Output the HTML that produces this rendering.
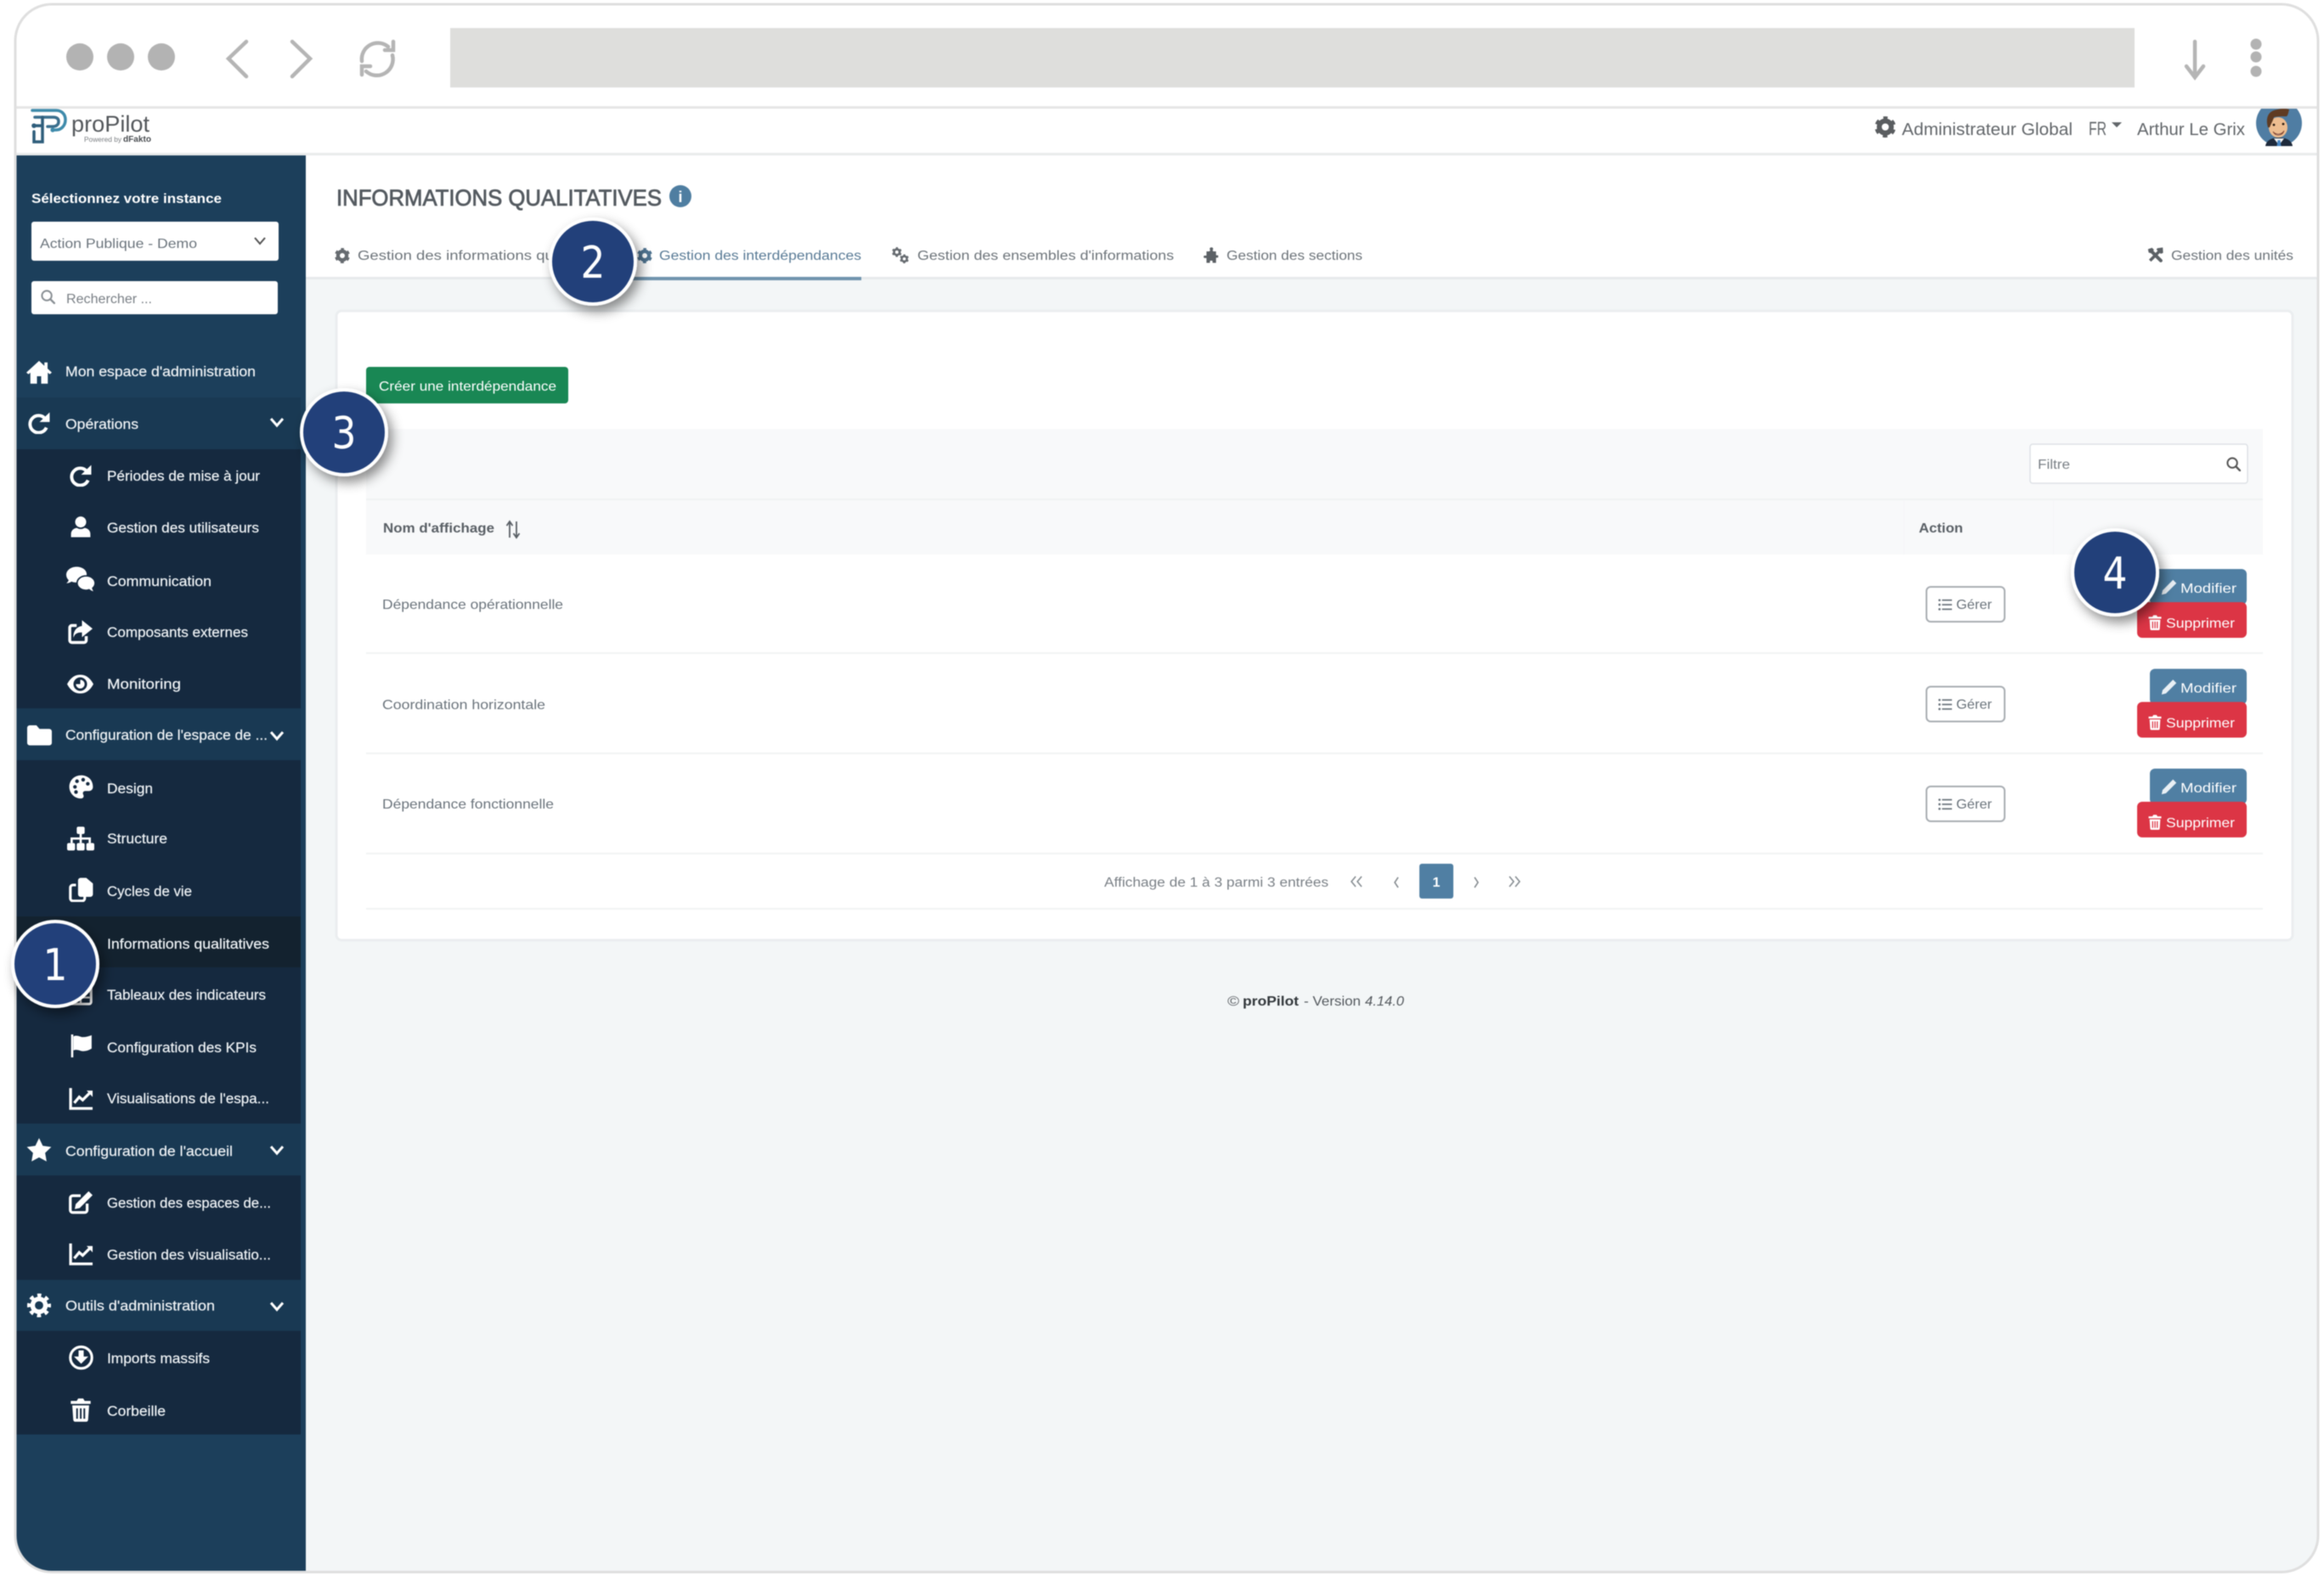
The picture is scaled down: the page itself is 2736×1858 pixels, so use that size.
<!DOCTYPE html>
<html lang="fr"><head><meta charset="utf-8"><title>proPilot</title>
<style>
html,body{margin:0;padding:0;background:#fff;width:2736px;height:1858px;overflow:hidden}
svg{display:block;filter:blur(.55px)}
text{font-family:"Liberation Sans",Arial,sans-serif;white-space:pre}
.s{font-size:16.5px;fill:#eef2f5;stroke:#eef2f5;stroke-width:.2}
.t{font-size:15.5px;fill:#6e757b}
.r{font-size:16px;fill:#6c757d}
.b{font-size:16px;fill:#fff}
.n{font-size:52px;fill:#fff;font-family:"DejaVu Sans","Liberation Sans",sans-serif;text-anchor:middle}
</style></head><body>
<svg xmlns="http://www.w3.org/2000/svg" width="2736" height="1858" viewBox="0 0 2736 1858">
<defs>
<clipPath id="win"><rect x="19" y="5" width="2709" height="1845" rx="42"/></clipPath>
<clipPath id="av"><rect x="2650" y="128" width="70" height="50"/></clipPath>
<filter id="sh" x="-30%" y="-30%" width="170%" height="170%"><feDropShadow dx="5" dy="7" stdDeviation="7" flood-color="#000" flood-opacity=".45"/></filter>
<symbol id="home" viewBox="0 0 24 24"><path fill="currentColor" d="M12 1.500 0 12.500l2 1.600 1.800-1.500V23H10v-7h4v7h6.200V12.600l1.800 1.500 2-1.600L20 8.800V3h-3v3.200z"/></symbol>
<symbol id="redo" viewBox="0 0 24 24"><path fill="none" stroke="currentColor" stroke-width="3.600" d="M18.500 7.200A9.300 9.300 0 1 0 20 17"/><path fill="currentColor" d="M12.500 11H23.500V.5z"/></symbol>
<symbol id="user" viewBox="0 0 24 24"><circle fill="currentColor" cx="12" cy="7" r="6"/><path fill="currentColor" d="M1.500 23.500V20c0-4 3.500-6.500 6.500-6.500 2.500 1.600 5.500 1.600 8 0 3 0 6.500 2.500 6.500 6.500v3.500z"/></symbol>
<symbol id="comments" viewBox="0 0 24 24"><path fill="currentColor" d="M8.500 1C3.800 1 0 4 0 7.700c0 1.700.8 3.200 2 4.400-.3 1-1 1.900-2 2.500 1.800 0 3.300-.6 4.400-1.400 1.200.5 2.600.8 4.100.8 4.700 0 8.500-3 8.500-6.700S13.200 1 8.500 1z"/><path fill="currentColor" stroke="#15293f" stroke-width="1.200" d="M16.500 8.500c-4.200 0-7.500 2.700-7.500 6s3.300 6 7.500 6c.9 0 1.700-.1 2.500-.4 1 .9 2.500 1.900 5 1.900-.8-.7-1.700-2-2-3.300 1.300-1.100 2-2.600 2-4.200 0-3.300-3.300-6-7.500-6z"/></symbol>
<symbol id="share" viewBox="0 0 24 24"><path fill="none" stroke="currentColor" stroke-width="2.800" d="M9 6H4.500A2 2 0 0 0 2.500 8v12a2 2 0 0 0 2 2H16a2 2 0 0 0 2-2v-4"/><path fill="currentColor" d="M14 1l10 8-10 8v-4.500c-4.500 0-6.800 1.200-8 5-.5-6 3-10.500 8-11z"/></symbol>
<symbol id="eye" viewBox="0 0 24 24"><path fill="currentColor" fill-rule="evenodd" d="M0 12C3.500 5.500 7.500 3.500 12 3.500S20.500 5.500 24 12c-3.500 6.500-7.500 8.500-12 8.500S3.500 18.500 0 12zM12 5.800a6.200 6.200 0 1 0 0 12.400 6.200 6.200 0 0 0 0-12.400zM12 8a4 4 0 1 1 0 8 4 4 0 0 1-4-4h4z"/></symbol>
<symbol id="folder" viewBox="0 0 24 24"><path fill="currentColor" d="M0 5a2.500 2.500 0 0 1 2.500-2.500H9L12 6h9.500A2.500 2.500 0 0 1 24 8.500v11a2.500 2.500 0 0 1-2.500 2.500h-19A2.500 2.500 0 0 1 0 19.500z"/></symbol>
<symbol id="palette" viewBox="0 0 24 24"><path fill="currentColor" d="M12 .7C5.500.7.500 5.500.5 12c0 6 5 11.300 11 11.300 3 0 3.500-2.200 2.500-4-.8-1.700.2-3.300 2-3.300h3.500c2.500 0 4-1.700 4-4C23.500 5 18.500.7 12 .7z"/><g fill="#15293f"><circle cx="6" cy="12" r="1.800"/><circle cx="8" cy="6.500" r="1.800"/><circle cx="14" cy="5" r="1.800"/><circle cx="18.500" cy="9" r="1.800"/><circle cx="7" cy="17" r="1.800"/></g></symbol>
<symbol id="sitemap" viewBox="0 0 24 24"><g fill="currentColor"><rect x="8.500" y="1" width="7" height="6.500" rx="1.500"/><rect x="0" y="15.500" width="7" height="6.500" rx="1.500"/><rect x="8.500" y="15.500" width="7" height="6.500" rx="1.500"/><rect x="17" y="15.500" width="7" height="6.500" rx="1.500"/><path d="M11 7.500h2V10.500h8V15.500h-2V12.500h-6V15.500h-2V12.500H5V15.500H3V10.500h8z"/></g></symbol>
<symbol id="copy" viewBox="0 0 24 24"><path fill="none" stroke="currentColor" stroke-width="2.600" d="M7 7.500H4A2.500 2.500 0 0 0 1.500 10v10.500A2.500 2.500 0 0 0 4 23h9a2.500 2.500 0 0 0 2.500-2.500V19"/><path fill="currentColor" d="M9 3a2.500 2.500 0 0 1 2.500-2.500H17L23.500 6v10.500a2.500 2.500 0 0 1-2.500 2.500h-9.500A2.500 2.500 0 0 1 9 16.500z"/></symbol>
<symbol id="tbl" viewBox="0 0 24 24"><rect x="1.500" y="2.500" width="21" height="19" rx="2" fill="none" stroke="currentColor" stroke-width="2.600"/><path fill="currentColor" d="M3 8h18v2H3zM3 14h18v2H3zM11 8h2v13h-2z"/></symbol>
<symbol id="flag" viewBox="0 0 24 24"><path fill="currentColor" d="M1.500 0h2.300v24H1.500z"/><path fill="currentColor" d="M4 2c4-2 7 .8 10 .8 3 0 6-.8 9-2v14c-3 2-6 2.700-9 2.700-3 0-6-2.500-10-.8z"/></symbol>
<symbol id="chart" viewBox="0 0 24 24"><path fill="none" stroke="currentColor" stroke-width="2.800" d="M1.800 1v20.500H24"/><path fill="none" stroke="currentColor" stroke-width="2.800" d="M5.500 16l5-6 3.500 3 7.500-7.500"/><path fill="currentColor" d="M18 3.500h6V10z"/></symbol>
<symbol id="star" viewBox="0 0 24 24"><path fill="currentColor" d="M12 .8l3.500 7.300 8 1.100-5.800 5.600 1.400 8L12 19l-7.100 3.800 1.400-8L.5 9.200l8-1.100z"/></symbol>
<symbol id="edit" viewBox="0 0 24 24"><path fill="none" stroke="currentColor" stroke-width="2.800" d="M12 5H4A2.500 2.500 0 0 0 1.500 7.500v12A2.500 2.500 0 0 0 4 22h12a2.500 2.500 0 0 0 2.500-2.500V13"/><path fill="currentColor" d="M20 .5l4 4L11 17.500l-5 1 1-5z"/></symbol>
<symbol id="cog8" viewBox="0 0 24 24"><circle cx="12" cy="12" r="6.500" fill="none" stroke="currentColor" stroke-width="4.600"/><circle cx="12" cy="12" r="10" fill="none" stroke="currentColor" stroke-width="4" stroke-dasharray="3.925 3.925" stroke-dashoffset="2"/></symbol>
<symbol id="cog6" viewBox="0 0 24 24"><circle cx="12" cy="12" r="6.800" fill="none" stroke="currentColor" stroke-width="5.600"/><circle cx="12" cy="12" r="10" fill="none" stroke="currentColor" stroke-width="4" stroke-dasharray="5 5.470" stroke-dashoffset="2.500" transform="rotate(-90 12 12)"/></symbol>
<symbol id="down" viewBox="0 0 24 24"><circle cx="12" cy="12" r="10.500" fill="none" stroke="currentColor" stroke-width="2.600"/><path fill="currentColor" d="M9.500 5h5v6H19l-7 7-7-7h4.500z"/></symbol>
<symbol id="trash" viewBox="0 0 24 24"><path fill="currentColor" fill-rule="evenodd" d="M3.500 7.500h17L19.500 22a2 2 0 0 1-2 2h-11a2 2 0 0 1-2-2zM7.500 10.500v10.500h1.700V10.500zM11.200 10.500v10.500h1.700V10.500zM14.800 10.500v10.500h1.700V10.500z"/><path fill="currentColor" d="M2 3h6l1.500-2.500h5L16 3h6v3H2z"/></symbol>
<symbol id="pencil" viewBox="0 0 24 24"><path fill="currentColor" d="M18 1l5 5L7.500 21.500l-6.500 1.500 1.500-6.500z"/></symbol>
<symbol id="list" viewBox="0 0 24 24"><g fill="currentColor"><circle cx="2" cy="4" r="2"/><circle cx="2" cy="12" r="2"/><circle cx="2" cy="20" r="2"/><rect x="6.500" y="2.700" width="17.500" height="2.600"/><rect x="6.500" y="10.700" width="17.500" height="2.600"/><rect x="6.500" y="18.700" width="17.500" height="2.600"/></g></symbol>
<symbol id="search" viewBox="0 0 24 24"><circle cx="10" cy="10" r="8" fill="none" stroke="currentColor" stroke-width="2.800"/><path stroke="currentColor" stroke-width="3.400" stroke-linecap="round" d="M16 16l6.500 6.500"/></symbol>
<symbol id="puzzle" viewBox="0 0 24 24"><path fill="currentColor" d="M9.500 2a2.800 2.800 0 0 1 5.500 0c0 1-.8 1.600-.8 2.500 0 .8.800 1.500 1.800 1.500h3.500v5c0 1 .8 1.500 1.500 1.200.8-.3 2-.5 2 1.800 0 2.300-1.200 2.100-2 1.800-.7-.3-1.500.2-1.500 1.200V24h-4.500c-1 0-1.300-.8-1-1.500.3-.8.500-2-2-2s-2.300 1.200-2 2c.3.700 0 1.500-1 1.500H4.500v-6.500c0-1-.8-1.500-1.500-1.200-.8.300-3 .5-3-1.800s2.200-2.100 3-1.800c.7.300 1.500-.2 1.500-1.200V6H8c1 0 2.300-.7 2.300-1.500 0-.9-.8-1.500-.8-2.500z"/></symbol>
<symbol id="tools" viewBox="0 0 24 24"><path fill="none" stroke="currentColor" stroke-width="5" stroke-linecap="round" d="M5 5l15 15"/><path stroke="currentColor" stroke-width="4.500" d="M19 5L4 20"/><path fill="currentColor" d="M15 1.500l8-1 .5 8-3.500 1.500-6.500-6.500zM1 3l6-2 3 3-5 5-3-1z"/></symbol>
<symbol id="cogs" viewBox="0 0 24 24"><use href="#cog6" x="0" y="0" width="14" height="14"/><use href="#cog6" x="11" y="10" width="13" height="13"/></symbol>
</defs>

<rect width="2736" height="1858" fill="#fff"/>
<g clip-path="url(#win)">
  <rect x="19" y="5" width="2709" height="1845" fill="#fff"/>
  <rect x="360" y="328" width="2368" height="1522" fill="#f3f6f7"/>
  <rect x="19" y="125" width="2709" height="3" fill="#e6e6e6"/>
  <rect x="19" y="180" width="2709" height="3" fill="#e9ebec"/>
  <rect x="19" y="183" width="341" height="1667" fill="#1c3f5b"/>
  <g fill="#193953">
    <rect x="19" y="468" width="335" height="61"/><rect x="19" y="834" width="335" height="61"/>
    <rect x="19" y="1323" width="335" height="61"/><rect x="19" y="1507" width="335" height="60"/>
  </g>
  <g fill="#15293f">
    <rect x="19" y="529" width="335" height="305"/><rect x="19" y="895" width="335" height="428"/>
    <rect x="19" y="1384" width="335" height="123"/><rect x="19" y="1567" width="335" height="122"/>
  </g>
  <rect x="19" y="1079" width="335" height="60" fill="#13222f"/>
  <rect x="360" y="326" width="2368" height="3" fill="#e7eaec"/>
</g>
<rect x="18" y="5" width="2711" height="1846" rx="43" fill="none" stroke="#dfdfdf" stroke-width="3"/>

<!-- browser chrome -->
<g fill="#b3b3b3"><circle cx="94" cy="67" r="16"/><circle cx="142" cy="67" r="16"/><circle cx="190" cy="67" r="16"/></g>
<g fill="none" stroke="#b5b5b5" stroke-width="4.500" stroke-linecap="round">
  <path d="M290 49 269 69l21 21"/><path d="M344 49l21 20-21 21"/>
  <path d="M426 72A19 19 0 0 1 457 55"/><path d="M462 65A19 19 0 0 1 431 84"/>
  <path d="M463 49v10h-10"/><path d="M426 88V78h10"/>
  <path d="M2584 49v41"/><path d="M2574 78l10 13 10-13"/>
</g>
<rect x="530" y="33" width="1983" height="70" fill="#dededc"/>
<g fill="#b3b3b3"><circle cx="2656" cy="52" r="6.500"/><circle cx="2656" cy="67" r="6.500"/><circle cx="2656" cy="84" r="6.500"/></g>

<!-- header -->
<g fill="none" stroke-linecap="round">
  <path stroke="#3f8bab" stroke-width="3.500" d="M38 130h28c7 0 11 5 11 11 0 7-5 12-11 12h-4"/>
  <path stroke="#3b6f8d" stroke-width="3.500" d="M41 138h22c4 0 6 2 6 5 0 4-3 6-7 6h-6"/>
  <path stroke="#2f5e7c" stroke-width="3.500" d="M41 148h9V138M50 148v19H40v-12"/>
</g>
<circle cx="40" cy="148" r="2.800" fill="#2f5e7c"/><circle cx="62" cy="153" r="2.600" fill="#3f8bab"/>
<text x="84" y="155" font-size="27" fill="#55595d" textLength="92" lengthAdjust="spacingAndGlyphs">proPilot</text>
<text x="99" y="167" font-size="8" fill="#7b7f83" textLength="44" lengthAdjust="spacingAndGlyphs">Powered by</text>
<text x="145" y="167" font-size="10" font-weight="bold" fill="#4b4f53" textLength="33" lengthAdjust="spacingAndGlyphs">dFakto</text>
<use href="#cog6" x="2207" y="137" width="25" height="25" color="#5a5d60"/>
<g font-size="20" fill="#63676b">
  <text x="2239" y="159" textLength="201" lengthAdjust="spacingAndGlyphs">Administrateur Global</text>
  <text x="2459" y="159" font-size="22" textLength="21" lengthAdjust="spacingAndGlyphs">FR</text>
  <text x="2516" y="159" textLength="127" lengthAdjust="spacingAndGlyphs">Arthur Le Grix</text>
</g>
<path d="M2486 144h12l-6 6z" fill="#63676b"/>
<g clip-path="url(#av)">
  <circle cx="2683" cy="145" r="27" fill="#4f7da3"/>
  <path d="M2667 172c1-7 8-10 16-10s15 3 16 10z" fill="#1e2a3c"/>
  <path d="M2677 163l6 8 6-8z" fill="#f1f3f5"/><path d="M2681.500 165h3l1 7h-5z" fill="#4a88c5"/>
  <ellipse cx="2682" cy="150" rx="11" ry="12" fill="#edbd90"/>
  <path d="M2670 150c-3-10 0-18 7-20 6-2 14-3 18-1-1 3-1 6-3 8-5 0-11 0-15 1-1 4-3 7-5 12z" fill="#5f3b22"/>
  <path d="M2676 155c3 4 10 4 13-1-2 6-10 7-13 1z" fill="#fff" stroke="#7a3d2a" stroke-width=".8"/>
  <circle cx="2677" cy="147" r="1.400" fill="#2a1c12"/><circle cx="2688" cy="146" r="1.400" fill="#2a1c12"/>
</g>

<!-- sidebar top -->
<text x="37" y="239" font-size="15.500" font-weight="bold" fill="#fff" textLength="224" lengthAdjust="spacingAndGlyphs">Sélectionnez votre instance</text>
<rect x="37" y="261" width="291" height="46" rx="3" fill="#fff"/>
<text x="47" y="292" font-size="16" fill="#6c757d" textLength="185" lengthAdjust="spacingAndGlyphs">Action Publique - Demo</text>
<path d="M300 280l6 7 6-7" fill="none" stroke="#555" stroke-width="2"/>
<rect x="37" y="331" width="290" height="39" rx="3" fill="#fff"/>
<use href="#search" x="48" y="341" width="17" height="17" color="#8a9095"/>
<text x="78" y="357" font-size="15.500" fill="#7b8187" textLength="101" lengthAdjust="spacingAndGlyphs">Rechercher ...</text>

<!-- sidebar items -->
<g color="#fff">
<use href="#home" x="31" y="423" width="30" height="30"/>
<use href="#redo" x="33" y="485" width="26" height="26"/>
<use href="#redo" x="82" y="547" width="26" height="26"/>
<use href="#user" x="82" y="607" width="26" height="26"/>
<use href="#comments" x="78" y="666" width="34" height="34"/>
<use href="#share" x="79" y="729" width="30" height="30"/>
<use href="#eye" x="79" y="790" width="31" height="31"/>
<use href="#folder" x="32" y="851" width="29" height="29"/>
<use href="#palette" x="81" y="912" width="29" height="29"/>
<use href="#sitemap" x="79" y="972" width="32" height="32"/>
<use href="#copy" x="81" y="1033" width="29" height="29"/>
<use href="#tbl" x="81" y="1157" width="28" height="28"/>
<use href="#flag" x="82" y="1218" width="27" height="27"/>
<use href="#chart" x="81" y="1280" width="28" height="28"/>
<use href="#star" x="31" y="1339" width="30" height="30"/>
<use href="#edit" x="81" y="1402" width="28" height="28"/>
<use href="#chart" x="81" y="1463" width="28" height="28"/>
<use href="#cog8" x="32" y="1523" width="28" height="28"/>
<use href="#down" x="81" y="1584" width="29" height="29"/>
<use href="#trash" x="81" y="1646" width="28" height="28"/>
</g>
<g class="sb">
<text class="s" x="77" y="443" textLength="224" lengthAdjust="spacingAndGlyphs">Mon espace d'administration</text>
<text class="s" x="77" y="505" textLength="86" lengthAdjust="spacingAndGlyphs">Opérations</text>
<text class="s" x="126" y="566" textLength="180" lengthAdjust="spacingAndGlyphs">Périodes de mise à jour</text>
<text class="s" x="126" y="627" textLength="179" lengthAdjust="spacingAndGlyphs">Gestion des utilisateurs</text>
<text class="s" x="126" y="690" textLength="123" lengthAdjust="spacingAndGlyphs">Communication</text>
<text class="s" x="126" y="750" textLength="166" lengthAdjust="spacingAndGlyphs">Composants externes</text>
<text class="s" x="126" y="811" textLength="87" lengthAdjust="spacingAndGlyphs">Monitoring</text>
<text class="s" x="77" y="871" textLength="238" lengthAdjust="spacingAndGlyphs">Configuration de l'espace de ...</text>
<text class="s" x="126" y="934" textLength="54" lengthAdjust="spacingAndGlyphs">Design</text>
<text class="s" x="126" y="993" textLength="71" lengthAdjust="spacingAndGlyphs">Structure</text>
<text class="s" x="126" y="1055" textLength="100" lengthAdjust="spacingAndGlyphs">Cycles de vie</text>
<text class="s" x="126" y="1117" textLength="191" lengthAdjust="spacingAndGlyphs">Informations qualitatives</text>
<text class="s" x="126" y="1177" textLength="187" lengthAdjust="spacingAndGlyphs">Tableaux des indicateurs</text>
<text class="s" x="126" y="1239" textLength="176" lengthAdjust="spacingAndGlyphs">Configuration des KPIs</text>
<text class="s" x="126" y="1299" textLength="191" lengthAdjust="spacingAndGlyphs">Visualisations de l'espa...</text>
<text class="s" x="77" y="1361" textLength="197" lengthAdjust="spacingAndGlyphs">Configuration de l'accueil</text>
<text class="s" x="126" y="1422" textLength="193" lengthAdjust="spacingAndGlyphs">Gestion des espaces de...</text>
<text class="s" x="126" y="1483" textLength="193" lengthAdjust="spacingAndGlyphs">Gestion des visualisatio...</text>
<text class="s" x="77" y="1543" textLength="176" lengthAdjust="spacingAndGlyphs">Outils d'administration</text>
<text class="s" x="126" y="1605" textLength="121" lengthAdjust="spacingAndGlyphs">Imports massifs</text>
<text class="s" x="126" y="1667" textLength="69" lengthAdjust="spacingAndGlyphs">Corbeille</text>
</g>
<g fill="none" stroke="#fff" stroke-width="3">
  <path d="M319 493l7 8 7-8"/><path d="M319 862l7 8 7-8"/><path d="M319 1350l7 8 7-8"/><path d="M319 1534l7 8 7-8"/>
</g>

<!-- title & tabs -->
<text x="396" y="242" font-size="27" fill="#555b61" stroke="#555b61" stroke-width=".8" textLength="383" lengthAdjust="spacingAndGlyphs">INFORMATIONS QUALITATIVES</text>
<circle cx="801" cy="231" r="13" fill="#4f7ea1"/>
<text x="801" y="238" font-size="18" font-weight="bold" fill="#fff" text-anchor="middle">i</text>

<use href="#cog6" x="394" y="292" width="18" height="18" color="#666b70"/>
<text class="t" x="421" y="306" textLength="303" lengthAdjust="spacingAndGlyphs">Gestion des informations qualitatives</text>
<use href="#cog6" x="750" y="292" width="18" height="18" color="#4f7390"/>
<text class="t" style="fill:#5b7c97" x="776" y="306" textLength="238" lengthAdjust="spacingAndGlyphs">Gestion des interdépendances</text>
<rect x="730" y="326" width="284" height="4" fill="#7094ae"/>
<use href="#cogs" x="1050" y="291" width="20" height="20" color="#666b70"/>
<text class="t" x="1080" y="306" textLength="302" lengthAdjust="spacingAndGlyphs">Gestion des ensembles d'informations</text>
<use href="#puzzle" x="1417" y="291" width="18" height="19" color="#5c6166"/>
<text class="t" x="1444" y="306" textLength="160" lengthAdjust="spacingAndGlyphs">Gestion des sections</text>
<use href="#tools" x="2528" y="291" width="19" height="19" color="#5c6166"/>
<text class="t" x="2556" y="306" textLength="144" lengthAdjust="spacingAndGlyphs">Gestion des unités</text>

<!-- card -->
<rect x="396" y="366" width="2303" height="741" rx="6" fill="#fff" stroke="#ebeef0" stroke-width="3"/>
<rect x="431" y="432" width="238" height="43" rx="4" fill="#198754"/>
<text class="b" x="446" y="460" textLength="209" lengthAdjust="spacingAndGlyphs">Créer une interdépendance</text>

<rect x="431" y="505" width="2233" height="148" fill="#f8f9fa"/>
<rect x="431" y="587" width="2233" height="2" fill="#f1f3f4"/>
<rect x="2241" y="589" width="1" height="64" fill="#f5f6f7"/><rect x="2417" y="589" width="1" height="64" fill="#f5f6f7"/>
<rect x="2390" y="523" width="256" height="46" rx="3" fill="#fff" stroke="#dee2e6" stroke-width="1.500"/>
<text x="2399" y="552" font-size="15.500" fill="#7b8187" textLength="38" lengthAdjust="spacingAndGlyphs">Filtre</text>
<use href="#search" x="2621" y="538" width="17" height="17" color="#555"/>
<text x="451" y="627" font-size="16" font-weight="bold" fill="#5a6066" textLength="131" lengthAdjust="spacingAndGlyphs">Nom d'affichage</text>
<text x="2259" y="627" font-size="16" font-weight="bold" fill="#5a6066" textLength="52" lengthAdjust="spacingAndGlyphs">Action</text>
<path d="M600 633V614m-3.500 5l3.500-5 3.500 5M608 614v19m-3.500-5l3.500 5 3.500-5" fill="none" stroke="#5a6066" stroke-width="1.800"/>

<g fill="#f1f3f4"><rect x="431" y="768" width="2233" height="2"/><rect x="431" y="886" width="2233" height="2"/><rect x="431" y="1004" width="2233" height="2"/><rect x="431" y="1069" width="2233" height="2"/></g>
<text class="r" x="450" y="717" textLength="213" lengthAdjust="spacingAndGlyphs">Dépendance opérationnelle</text>
<text class="r" x="450" y="835" textLength="192" lengthAdjust="spacingAndGlyphs">Coordination horizontale</text>
<text class="r" x="450" y="952" textLength="202" lengthAdjust="spacingAndGlyphs">Dépendance fonctionnelle</text>

<g id="rows">
<g>
<rect x="2268" y="691" width="92" height="41" rx="5" fill="#fff" stroke="#a9aeb3" stroke-width="2"/>
<use href="#list" x="2281" y="704" width="18" height="16" color="#6c757d"/>
<text class="r" x="2303" y="717" textLength="42" lengthAdjust="spacingAndGlyphs">Gérer</text>
<rect x="2531" y="670" width="114" height="42" rx="6" fill="#507fa3"/>
<use href="#pencil" x="2544" y="682" width="19" height="19" color="#eaf0f5"/>
<text class="b" x="2567" y="698" textLength="66" lengthAdjust="spacingAndGlyphs">Modifier</text>
<rect x="2516" y="709" width="129" height="42" rx="6" fill="#dc3545"/>
<use href="#trash" x="2528" y="724" width="18" height="18" color="#fff"/>
<text class="b" x="2550" y="739" textLength="81" lengthAdjust="spacingAndGlyphs">Supprimer</text>
</g>
<g transform="translate(0 117.500)">
<rect x="2268" y="691" width="92" height="41" rx="5" fill="#fff" stroke="#a9aeb3" stroke-width="2"/>
<use href="#list" x="2281" y="704" width="18" height="16" color="#6c757d"/>
<text class="r" x="2303" y="717" textLength="42" lengthAdjust="spacingAndGlyphs">Gérer</text>
<rect x="2531" y="670" width="114" height="42" rx="6" fill="#507fa3"/>
<use href="#pencil" x="2544" y="682" width="19" height="19" color="#eaf0f5"/>
<text class="b" x="2567" y="698" textLength="66" lengthAdjust="spacingAndGlyphs">Modifier</text>
<rect x="2516" y="709" width="129" height="42" rx="6" fill="#dc3545"/>
<use href="#trash" x="2528" y="724" width="18" height="18" color="#fff"/>
<text class="b" x="2550" y="739" textLength="81" lengthAdjust="spacingAndGlyphs">Supprimer</text>
</g>
<g transform="translate(0 235)">
<rect x="2268" y="691" width="92" height="41" rx="5" fill="#fff" stroke="#a9aeb3" stroke-width="2"/>
<use href="#list" x="2281" y="704" width="18" height="16" color="#6c757d"/>
<text class="r" x="2303" y="717" textLength="42" lengthAdjust="spacingAndGlyphs">Gérer</text>
<rect x="2531" y="670" width="114" height="42" rx="6" fill="#507fa3"/>
<use href="#pencil" x="2544" y="682" width="19" height="19" color="#eaf0f5"/>
<text class="b" x="2567" y="698" textLength="66" lengthAdjust="spacingAndGlyphs">Modifier</text>
<rect x="2516" y="709" width="129" height="42" rx="6" fill="#dc3545"/>
<use href="#trash" x="2528" y="724" width="18" height="18" color="#fff"/>
<text class="b" x="2550" y="739" textLength="81" lengthAdjust="spacingAndGlyphs">Supprimer</text>
</g>
</g>

<!-- pagination -->
<text x="1300" y="1044" font-size="15.500" fill="#7b8187" textLength="264" lengthAdjust="spacingAndGlyphs">Affichage de 1 à 3 parmi 3 entrées</text>
<g fill="none" stroke="#888e93" stroke-width="1.600">
  <path d="M1596 1032l-5 6 5 6M1603 1032l-5 6 5 6"/><path d="M1646 1033l-4 6 4 6"/>
  <path d="M1736 1033l4 6-4 6"/><path d="M1777 1032l5 6-5 6M1784 1032l5 6-5 6"/>
</g>
<rect x="1671" y="1017" width="40" height="41" rx="3" fill="#507fa3"/>
<text x="1691" y="1044" font-size="16" font-weight="bold" fill="#fff" text-anchor="middle">1</text>

<!-- footer -->
<g font-size="16" fill="#555a5f">
  <text x="1445" y="1184" textLength="14" lengthAdjust="spacingAndGlyphs">©</text>
  <text x="1463" y="1184" font-weight="bold" fill="#33383c" textLength="66" lengthAdjust="spacingAndGlyphs">proPilot</text>
  <text x="1535" y="1184" textLength="67" lengthAdjust="spacingAndGlyphs">- Version</text>
  <text x="1607" y="1184" font-style="italic" textLength="46" lengthAdjust="spacingAndGlyphs">4.14.0</text>
</g>

<!-- numbered markers -->
<g stroke="#fff" stroke-width="4" fill="#21407a" filter="url(#sh)">
  <circle cx="65" cy="1135" r="50"/><circle cx="698" cy="308" r="50"/><circle cx="405" cy="509" r="50"/><circle cx="2490" cy="674" r="50"/>
</g>
<text class="n" x="65" y="1154" textLength="29" lengthAdjust="spacingAndGlyphs">1</text>
<text class="n" x="698" y="327" textLength="29" lengthAdjust="spacingAndGlyphs">2</text>
<text class="n" x="405" y="528" textLength="29" lengthAdjust="spacingAndGlyphs">3</text>
<text class="n" x="2490" y="693" textLength="29" lengthAdjust="spacingAndGlyphs">4</text>
</svg>
</body></html>
